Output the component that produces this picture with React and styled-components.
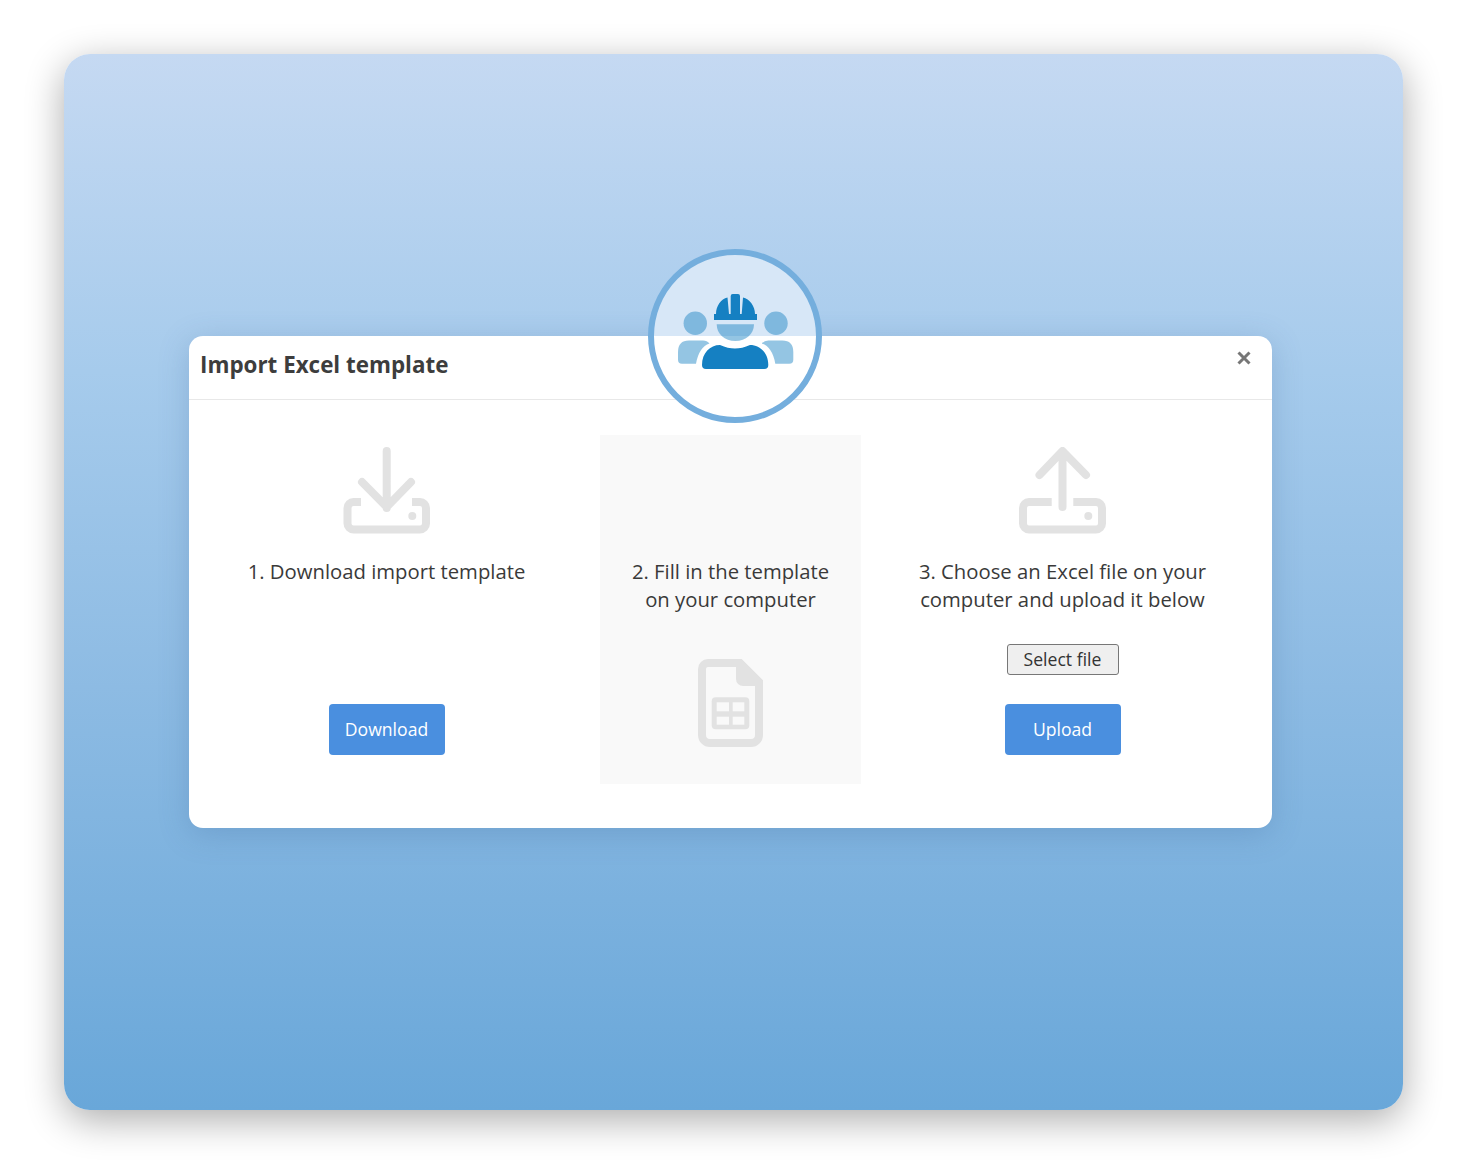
import React from 'react';
import styled, { createGlobalStyle } from 'styled-components';

const GlobalStyle = createGlobalStyle`
    html, body {
        margin: 0;
        padding: 0;
        background: #fff;
    }
    body {
        font-family: "Open Sans", "Liberation Sans", sans-serif;
    }
`;

const ICON_GREY = '#e2e2e2';
const HAT_BLUE = '#1580c2';

function TeamBadge() {
    return (
        <BadgeSvg viewBox="675 290 122 82">
            <g fill={HAT_BLUE} opacity="0.45">
                <circle cx="695.3" cy="323.3" r="11.7" />
                <circle cx="776" cy="323.3" r="11.7" />
                <path d="M689 340.5H703q4 0 6.5 3Q699 347 696 363.7H682q-4 0-4-4V352q0-11.5 11-11.5Z" />
                <path d="M782.3 340.5H768.3q-4 0-6.5 3Q772.3 347 775.3 363.7H789.3q4 0 4-4V352q0-11.5-11-11.5Z" />
                <path d="M716.7 324.3H754C754 334 746 341 735.3 341S716.7 334 716.7 324.3Z" />
            </g>
            <g fill={HAT_BLUE}>
                <path d="M702 365C702 353 710 345 720 345Q728 348.5 735 348.5T750 345C760 345 768.3 353 768.3 365q0 4-4 4H706q-4 0-4-4Z" />
                <path d="M714 314H716C716 306 721 299 727.5 297.5L729 314H730.7V296q0-2 2-2h5.3q2 0 2 2V314H741.7L743 297.5C749.5 299 755 306 755 314H757V320H714Z" />
            </g>
        </BadgeSvg>
    );
}

function DownloadIcon() {
    return (
        <LineIcon viewBox="343 447 88 88">
            <path d="M386.7 451V508M362 482L386.7 507L411 482" />
            <path d="M361 502H353.5a6 6 0 0 0-6 6V523.5a6 6 0 0 0 6 6H420a6 6 0 0 0 6-6V508a6 6 0 0 0-6-6H412" strokeLinecap="butt" />
            <circle cx="412.3" cy="516" r="4" fill={ICON_GREY} stroke="none" />
        </LineIcon>
    );
}

function UploadIcon() {
    return (
        <LineIcon viewBox="1019 447 88 88">
            <path d="M1062.5 452V507M1039.5 475L1062.5 451L1086 475" />
            <path d="M1051.7 502H1029a6 6 0 0 0-6 6V523.5a6 6 0 0 0 6 6H1096a6 6 0 0 0 6-6V508a6 6 0 0 0-6-6H1073.3" strokeLinecap="butt" />
            <circle cx="1088.3" cy="516" r="4" fill={ICON_GREY} stroke="none" />
        </LineIcon>
    );
}

function SheetIcon() {
    return (
        <SheetSvg viewBox="698 659 66 88">
            <path d="M708 663H740L759 682V735a8 8 0 0 1-8 8H710a8 8 0 0 1-8-8V669a6 6 0 0 1 6-6Z" fill="none" stroke={ICON_GREY} strokeWidth="8" />
            <path d="M736 660H742L763 681V686H743a7 7 0 0 1-7-7Z" fill={ICON_GREY} />
            <rect x="711.7" y="697.3" width="37.6" height="32" rx="4" fill={ICON_GREY} />
            <rect x="716.7" y="702.3" width="12.3" height="9" fill="#f9f9f9" />
            <rect x="732.7" y="702.3" width="11.6" height="9" fill="#f9f9f9" />
            <rect x="716.7" y="716.7" width="12.3" height="8" fill="#f9f9f9" />
            <rect x="732.7" y="716.7" width="11.6" height="8" fill="#f9f9f9" />
        </SheetSvg>
    );
}

export default function App() {
    return (
        <>
            <GlobalStyle />
            <Stage>
                <Backdrop>
                    <Dialog>
                        <Badge>
                            <TeamBadge />
                        </Badge>
                        <Header>
                            <Title>Import Excel template</Title>
                            <CloseButton aria-label="Close">
                                <svg width="14" height="14" viewBox="0 0 14 14">
                                    <path d="M1.5 1.5L12.5 12.5M12.5 1.5L1.5 12.5" stroke="#777" strokeWidth="3" />
                                </svg>
                            </CloseButton>
                        </Header>
                        <Steps>
                            <Step>
                                <IconSlot><DownloadIcon /></IconSlot>
                                <StepText>1. Download import template</StepText>
                                <PrimaryButton>Download</PrimaryButton>
                            </Step>
                            <Step $shaded>
                                <IconSlot />
                                <StepText>2. Fill in the template on your computer</StepText>
                                <SheetIcon />
                            </Step>
                            <Step>
                                <IconSlot><UploadIcon /></IconSlot>
                                <StepText>3. Choose an Excel file on your computer and upload it below</StepText>
                                <SelectFile>Select file</SelectFile>
                                <PrimaryButton>Upload</PrimaryButton>
                            </Step>
                        </Steps>
                    </Dialog>
                </Backdrop>
            </Stage>
        </>
    );
}

const Stage = styled.div`
    box-sizing: border-box;
    width: 1470px;
    height: 1167px;
    padding: 54px 67px 57px 64px;
    overflow: hidden;
`;

const Backdrop = styled.div`
    height: 100%;
    border-radius: 26px;
    background: linear-gradient(180deg, #c5d9f2 0%, #a6cbec 30%, #8dbbe3 60%, #69a7d9 100%);
    box-shadow: 0 10px 38px rgba(0, 0, 0, 0.33);
    display: flex;
    align-items: center;
    padding-left: 125px;
`;

const Dialog = styled.div`
    position: relative;
    width: 1083px;
    height: 492px;
    background: #fff;
    border-radius: 14px;
    box-shadow: 0 6px 30px rgba(60, 100, 150, 0.25);
`;

const Badge = styled.div`
    position: absolute;
    top: -87px;
    left: 459px;
    box-sizing: border-box;
    width: 174px;
    height: 174px;
    border: 6px solid #74aedd;
    border-radius: 50%;
    background: linear-gradient(180deg, #d7e7f7 50%, #fff 50%);
    display: flex;
    align-items: center;
    justify-content: center;
`;

const BadgeSvg = styled.svg`
    width: 122px;
    height: 82px;
    margin: -10px 0 0 2px;
`;

const Header = styled.div`
    box-sizing: border-box;
    height: 64px;
    padding: 0 21px 7px 11px;
    border-bottom: 1px solid #e8e8e8;
    display: flex;
    align-items: center;
    justify-content: space-between;
`;

const Title = styled.h2`
    margin: 0;
    font-size: 22.4px;
    font-weight: 700;
    color: #3d3d3d;
`;

const CloseButton = styled.button`
    border: 0;
    padding: 0;
    background: none;
    display: flex;
    margin-bottom: 13px;
`;

const Steps = styled.div`
    display: grid;
    grid-template-columns: 373px 261px 349px;
    column-gap: 27px;
    padding: 35px 0 44px 11px;
`;

const Step = styled.div`
    box-sizing: border-box;
    height: 349px;
    padding: 12px 20px 29px;
    display: flex;
    flex-direction: column;
    align-items: center;
    background: ${props => (props.$shaded ? '#f9f9f9' : 'transparent')};
`;

const IconSlot = styled.div`
    height: 88px;
    margin-bottom: 23px;
`;

const LineIcon = styled.svg`
    display: block;
    width: 88px;
    height: 88px;
    fill: none;
    stroke: ${ICON_GREY};
    stroke-width: 8;
    stroke-linecap: round;
    stroke-linejoin: round;
`;

const SheetSvg = styled.svg`
    width: 66px;
    height: 88px;
    margin: auto 0 8px;
`;

const StepText = styled.p`
    margin: 0;
    font-size: 20.3px;
    line-height: 27.6px;
    text-align: center;
    color: #3a3a3a;
`;

const SelectFile = styled.button`
    box-sizing: border-box;
    width: 112px;
    height: 31px;
    margin-top: 31px;
    padding: 0 0 1px;
    border: 1.5px solid #777;
    border-radius: 3px;
    background: #efefef;
    font-family: inherit;
    font-size: 17.6px;
    color: #333;
`;

const PrimaryButton = styled.button`
    box-sizing: border-box;
    width: 116px;
    height: 51px;
    margin-top: auto;
    padding: 0 0 2px;
    border: 0;
    border-radius: 4px;
    background: #4a8fdf;
    font-family: inherit;
    font-size: 17.6px;
    color: #fff;
`;
